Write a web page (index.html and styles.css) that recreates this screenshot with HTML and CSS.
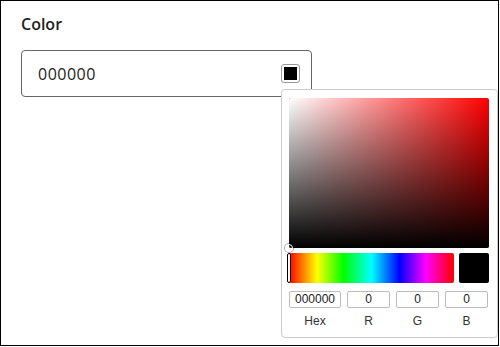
FILE: index.html
```html
<!DOCTYPE html>
<html>
<head>
<meta charset="utf-8">
<link rel="stylesheet" href="styles.css">
</head>
<body>
<div class="frame">
  <div class="field-label">Color</div>
  <div class="color-input">
    <span class="value">000000</span>
    <span class="swatch"><span class="swatch-fill"></span></span>
  </div>
  <div class="picker">
    <div class="saturation">
      <div class="sat-white"></div>
      <div class="sat-black"></div>
      <div class="sat-pointer"></div>
    </div>
    <div class="hue-row">
      <div class="hue">
        <div class="hue-pointer"></div>
      </div>
      <div class="preview"></div>
    </div>
    <div class="fields">
      <div class="field"><div class="box">000000</div><div class="cap">Hex</div></div>
      <div class="field"><div class="box">0</div><div class="cap">R</div></div>
      <div class="field"><div class="box">0</div><div class="cap">G</div></div>
      <div class="field"><div class="box">0</div><div class="cap">B</div></div>
    </div>
  </div>
</div>
</body>
</html>
```
FILE: styles.css
```css
* { box-sizing: border-box; }
html, body { margin: 0; padding: 0; background: #fff; }
body { font-family: "Open Sans", "Noto Sans", sans-serif; color: #222; }

.frame {
  position: relative;
  width: 499px;
  height: 346px;
  border: 1px solid #000;
  padding: 13px 0 0 20px;
}

.field-label {
  font-size: 16px;
  font-weight: 600;
  line-height: 20px;
  color: #222;
}

.color-input {
  margin-top: 16px;
  width: 291px;
  height: 47px;
  border: 1px solid #666;
  border-radius: 4px;
  display: flex;
  align-items: center;
  justify-content: space-between;
  padding: 0 11px 0 16px;
}

.value {
  font-size: 16px;
  letter-spacing: 0.5px;
  line-height: 20px;
  color: #222;
  padding-top: 1px;
}

.swatch {
  width: 19px;
  height: 19px;
  border: 1px solid #999;
  border-radius: 3px;
  padding: 2px;
  display: block;
  background: #fff;
}
.swatch-fill { display: block; width: 100%; height: 100%; background: #000; }

.picker {
  position: absolute;
  left: 280px;
  top: 88px;
  width: 217px;
  height: 249px;
  background: #fff;
  border: 1px solid #ccc;
  border-radius: 4px;
  padding: 8px 7px 0 7px;
  display: flex;
  flex-direction: column;
}

.saturation {
  position: relative;
  width: 200px;
  height: 150px;
  background: #f00;
  border-radius: 2px;
}
.sat-white, .sat-black {
  position: absolute;
  inset: 0;
  border-radius: 2px;
}
.sat-white { background: linear-gradient(to right, #fff, rgba(255,255,255,0)); }
.sat-black { background: linear-gradient(to bottom, rgba(0,0,0,0), #000); }
.sat-pointer {
  position: absolute;
  left: -4px;
  bottom: -4px;
  width: 8px;
  height: 8px;
  border-radius: 50%;
  border: 1.5px solid #fff;
  box-shadow: 0 0 0 1px rgba(0,0,0,0.35);
}

.hue-row {
  display: flex;
  gap: 5px;
  margin-top: 5px;
}
.hue {
  position: relative;
  width: 165px;
  height: 30px;
  border-radius: 2px;
  background: linear-gradient(to right, #f00 0%, #ff0 17%, #0f0 33%, #0ff 50%, #00f 67%, #f0f 83%, #f00 100%);
}
.hue-pointer {
  position: absolute;
  left: -2px;
  top: 0;
  width: 4px;
  height: 30px;
  background: #fff;
  border: 1px solid #000;
  border-radius: 2px;
}
.preview {
  width: 30px;
  height: 30px;
  background: #000;
  border-radius: 2px;
}

.fields {
  display: grid;
  grid-template-columns: 52px 1fr 1fr 1fr;
  column-gap: 6px;
  margin-top: 8px;
  width: 199px;
  font-family: "Liberation Sans", Arial, sans-serif;
}
.field { display: flex; flex-direction: column; align-items: center; }
.box {
  width: 100%;
  height: 17px;
  border: 1px solid #bbb;
  border-radius: 2px;
  font-size: 12px;
  line-height: 15px;
  text-align: center;
  color: #222;
}
.cap {
  margin-top: 6px;
  font-size: 12px;
  line-height: 14px;
  color: #333;
}
```
